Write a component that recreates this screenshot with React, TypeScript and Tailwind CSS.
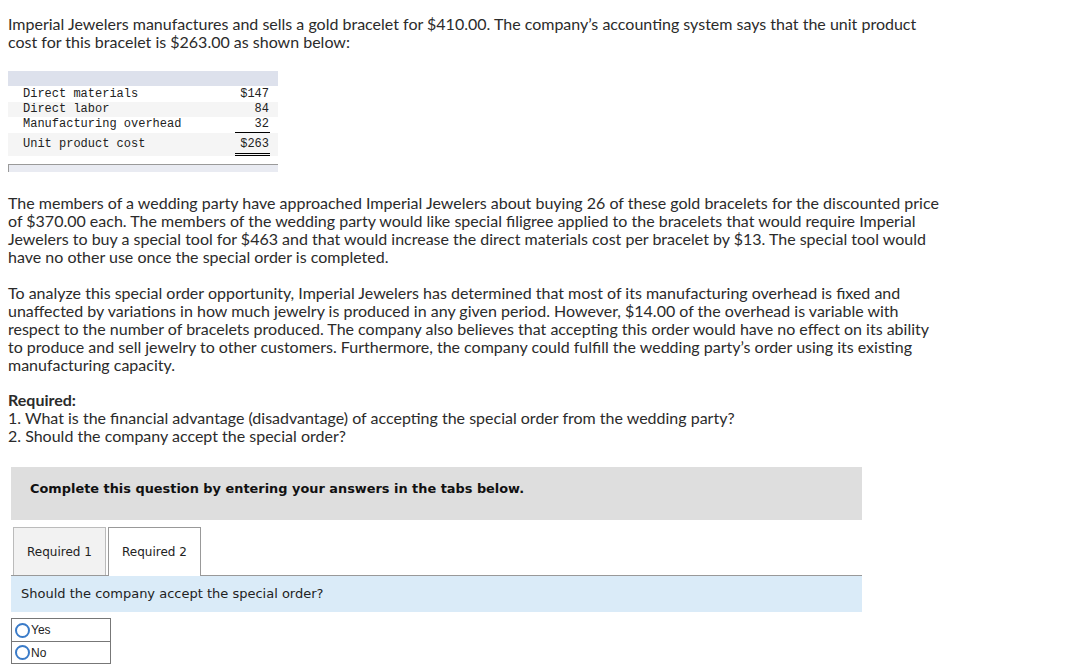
import React from "react";

const body = { fontFamily: "Lato, 'Open Sans', sans-serif" };

function Radio({ label }: { label: string }) {
  return (
    <div className="flex items-center h-[23px] border border-[#777] first:border-b-0 bg-white">
      <span className="ml-[3px] inline-block w-[15px] h-[15px] rounded-full border-2 border-[#3a7bc8] bg-white" />
      <span className="ml-[1px] text-[12px] text-[#222]" style={{ fontFamily: "'Liberation Sans', Arial, sans-serif" }}>
        {label}
      </span>
    </div>
  );
}

function Lines({ lines }: { lines: string[] }) {
  return (
    <>
      {lines.map((l, i) => (
        <span key={i} className="block whitespace-nowrap">
          {l}
        </span>
      ))}
    </>
  );
}

export default function App() {
  return (
    <div className="w-[1089px] h-[671px] bg-white overflow-hidden text-[#2b2b2b]">
      <div className="px-[8px] pt-[15px] text-[16px] leading-[18px]" style={body}>
        <p>
          <Lines
            lines={[
              "Imperial Jewelers manufactures and sells a gold bracelet for $410.00. The company’s accounting system says that the unit product",
              "cost for this bracelet is $263.00 as shown below:",
            ]}
          />
        </p>

        <div className="mt-[20px] w-[270px]" style={{ fontFamily: "'Liberation Mono', 'DejaVu Sans Mono', monospace" }}>
          <div className="h-[15px] bg-[#dde1ec]" />
          <div className="text-[12px] leading-[15px] text-[#222]">
            <div className="flex pl-[15px] pr-[9px] bg-white pt-[1px]">
              <span className="flex-1">Direct materials</span>
              <span className="w-[34px] text-right">$147</span>
            </div>
            <div className="flex pl-[15px] pr-[9px] bg-[#f5f5f5]">
              <span className="flex-1">Direct labor</span>
              <span className="w-[34px] text-right">84</span>
            </div>
            <div className="flex pl-[15px] pr-[8px] bg-white">
              <span className="flex-1">Manufacturing overhead</span>
              <span className="w-[35px] pr-[1px] text-right border-b border-black">32</span>
            </div>
            <div className="flex items-start pl-[15px] pr-[8px] bg-[#f5f5f5] h-[23px] pt-[4px]">
              <span className="flex-1">Unit product cost</span>
              <span className="w-[35px] pr-[1px] text-right border-b-[3px] border-double border-black leading-[15px] pb-[1px]">$263</span>
            </div>
          </div>
          <div className="mt-[8px] h-[8px] bg-[#e9ebf2] border-t border-l border-[#9a9a9a]" />
        </div>

        <p className="mt-[22px]">
          <Lines
            lines={[
              "The members of a wedding party have approached Imperial Jewelers about buying 26 of these gold bracelets for the discounted price",
              "of $370.00 each. The members of the wedding party would like special filigree applied to the bracelets that would require Imperial",
              "Jewelers to buy a special tool for $463 and that would increase the direct materials cost per bracelet by $13. The special tool would",
              "have no other use once the special order is completed.",
            ]}
          />
        </p>

        <p className="mt-[18px]">
          <Lines
            lines={[
              "To analyze this special order opportunity, Imperial Jewelers has determined that most of its manufacturing overhead is fixed and",
              "unaffected by variations in how much jewelry is produced in any given period. However, $14.00 of the overhead is variable with",
              "respect to the number of bracelets produced. The company also believes that accepting this order would have no effect on its ability",
              "to produce and sell jewelry to other customers. Furthermore, the company could fulfill the wedding party’s order using its existing",
              "manufacturing capacity.",
            ]}
          />
        </p>

        <p className="mt-[17px]">
          <span className="block font-bold">Required:</span>
          <span className="block">1. What is the financial advantage (disadvantage) of accepting the special order from the wedding party?</span>
          <span className="block">2. Should the company accept the special order?</span>
        </p>
      </div>

      <div className="pl-[11px] mt-[22px] w-[862px]" style={{ fontFamily: "'DejaVu Sans', Verdana, sans-serif" }}>
        <div className="h-[53px] bg-[#dedede] pt-[14px] pl-[19px] text-[12.9px] leading-[16px] font-bold text-[#111]">
          Complete this question by entering your answers in the tabs below.
        </div>

        <div className="mt-[8px] flex items-end pl-[2px] gap-[2px] h-[48px] border-b border-[#999]">
          <div className="w-[93px] h-[48px] bg-[#f2f2f2] border border-[#bbb] border-b-0 flex items-center justify-center text-[12px] text-[#222]">
            Required 1
          </div>
          <div className="w-[93px] h-[49px] -mb-[1px] bg-white border border-[#999] border-b-0 flex items-center justify-center text-[12px] text-[#222]">
            Required 2
          </div>
        </div>

        <div className="h-[36px] bg-[#daebf8] flex items-center pl-[10px] text-[13px] text-[#222]">
          Should the company accept the special order?
        </div>

        <div className="mt-[6px] w-[100px]">
          <Radio label="Yes" />
          <Radio label="No" />
        </div>
      </div>
    </div>
  );
}
